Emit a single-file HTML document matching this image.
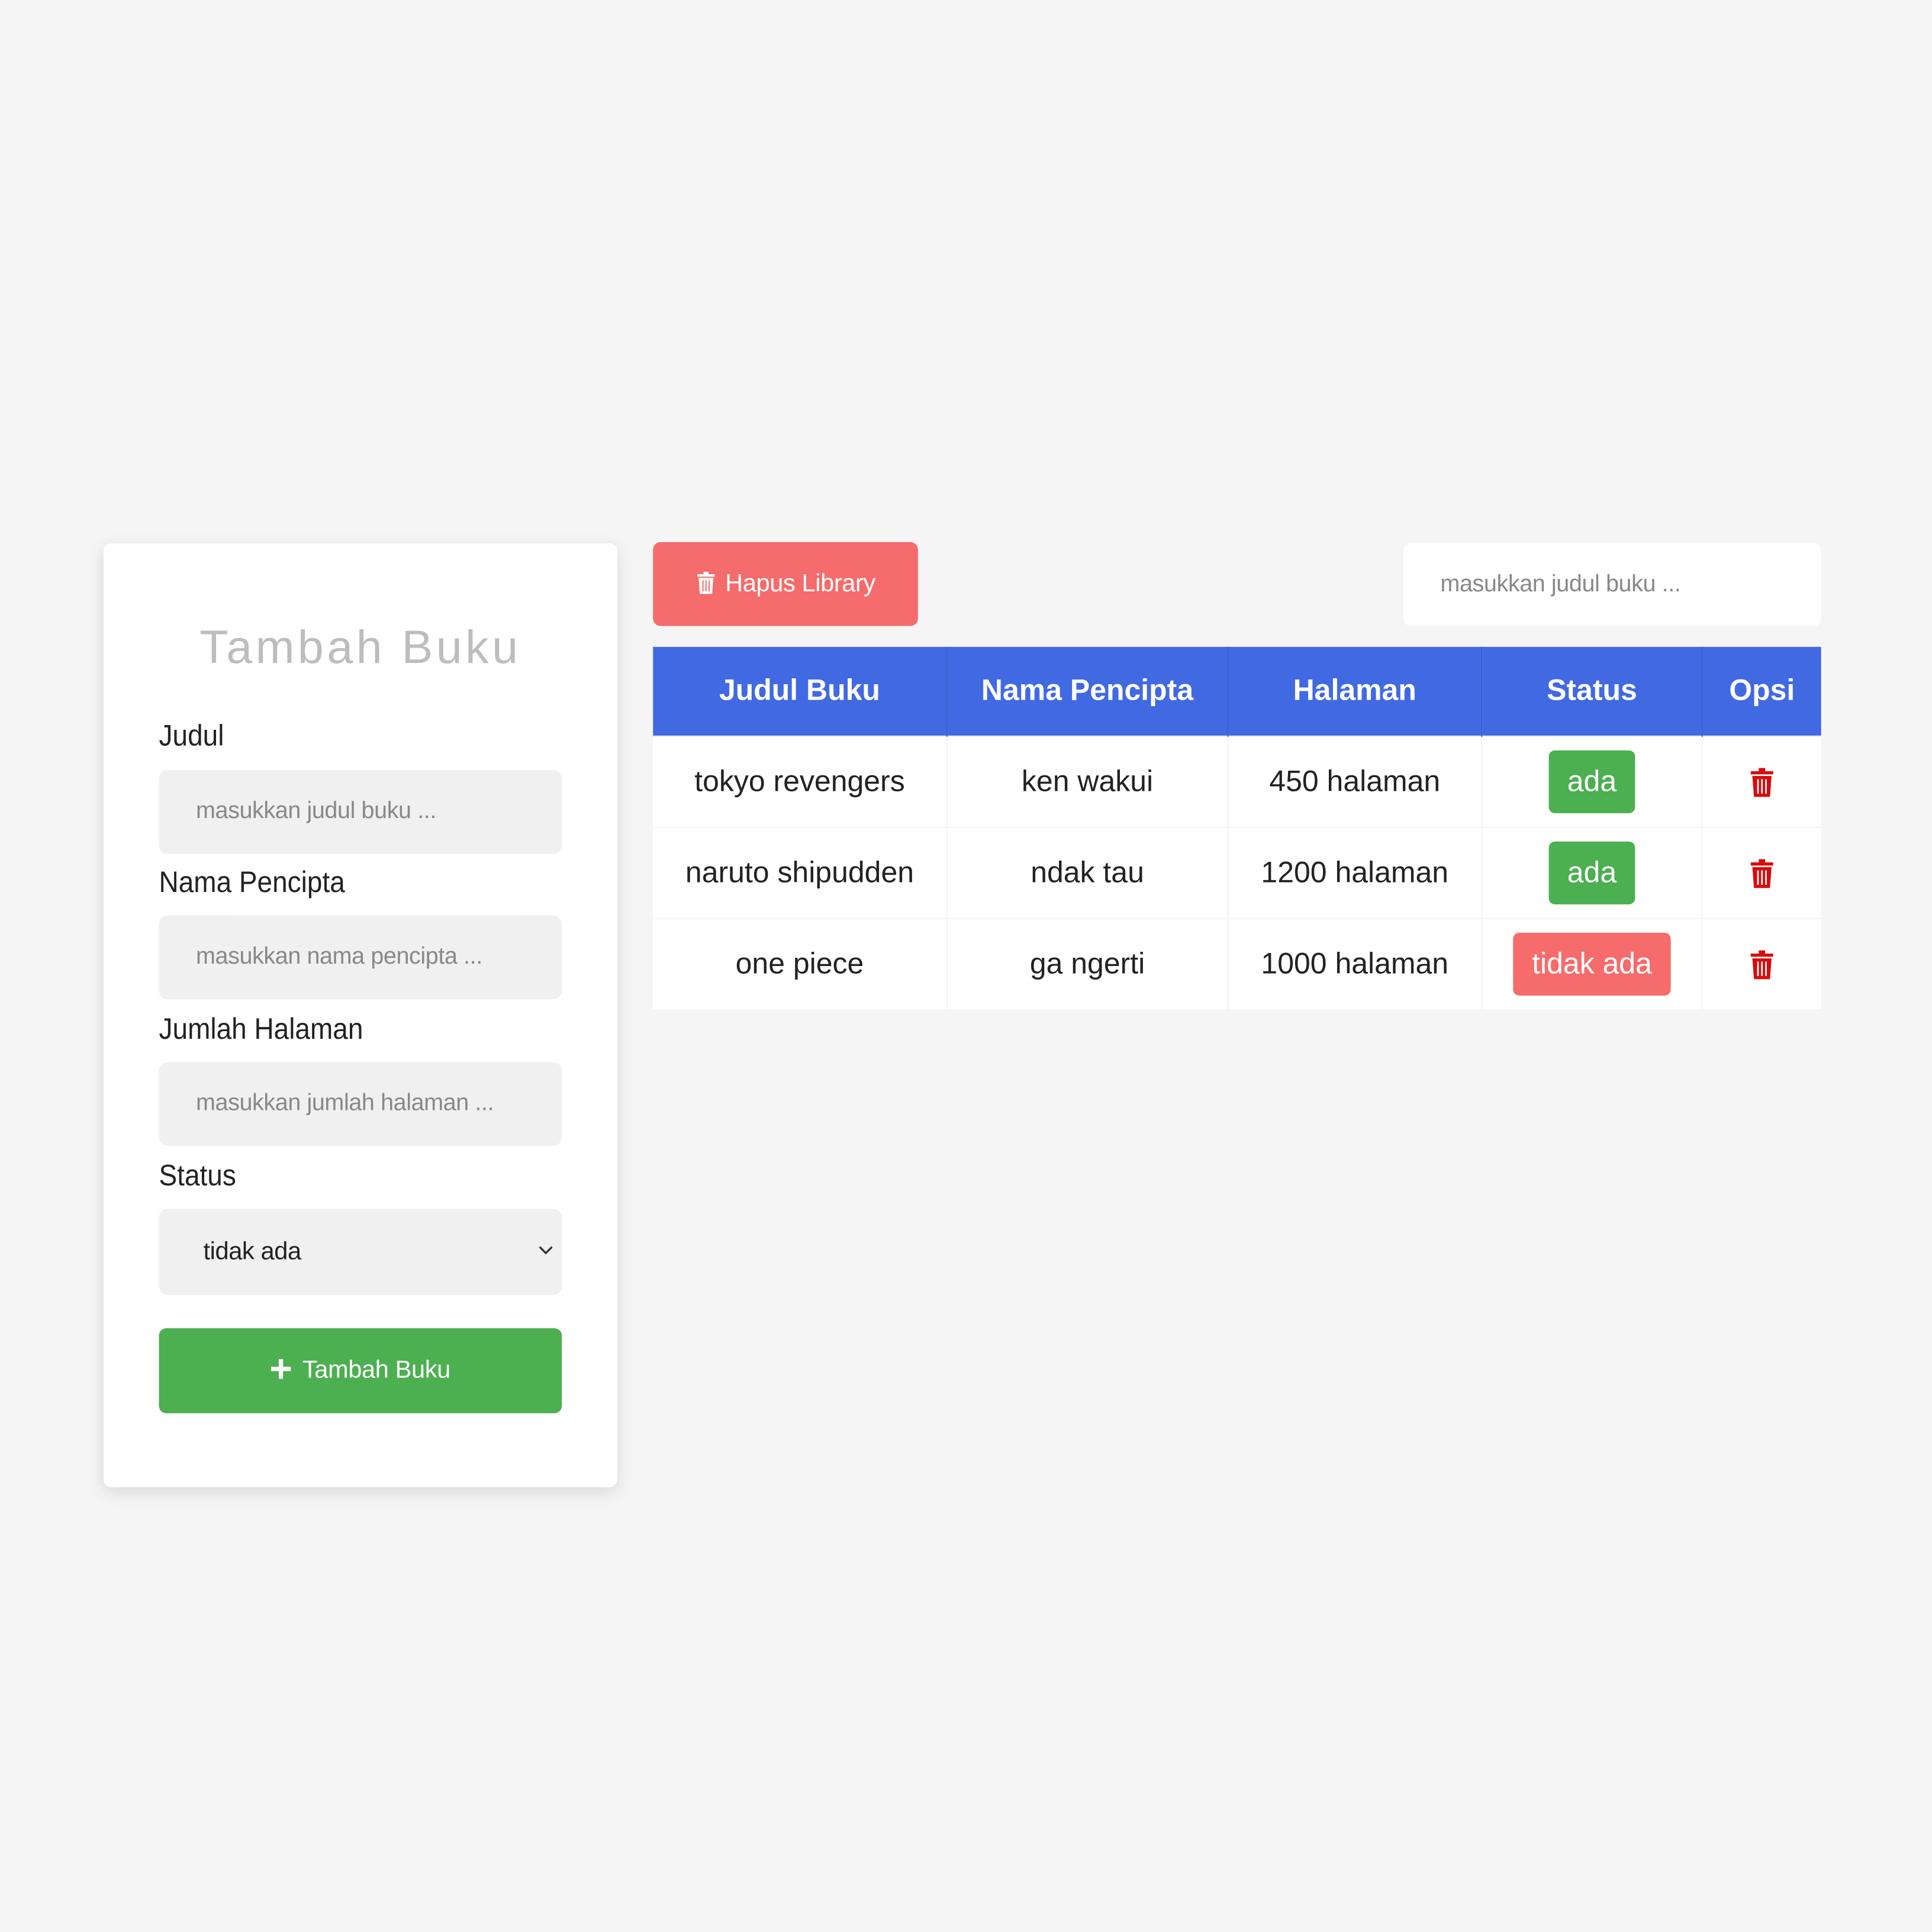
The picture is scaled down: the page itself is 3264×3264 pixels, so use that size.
<!DOCTYPE html>
<html><head><meta charset="utf-8"><style>
html,body{margin:0;padding:0;background:#f5f5f5;}
#w{position:absolute;left:0;top:0;width:1568px;height:1568px;transform:scale(2.0816327);transform-origin:0 0;font-family:"Liberation Sans",sans-serif;background:#f5f5f5;overflow:hidden}
.a{position:absolute}
.card{left:84px;top:441px;width:417px;height:766px;background:#fff;border-radius:6px;box-shadow:0 4px 14px rgba(0,0,0,.12)}
.title{left:84px;width:417px;top:505px;text-align:center;font-size:38px;color:#bdbdbd;letter-spacing:2.6px}
.lbl{left:129px;font-size:24px;color:#222}
.inp{left:129px;width:327px;height:68px;background:#f0f0f0;border-radius:7px;box-sizing:border-box;padding-left:30px;line-height:68px;font-size:19px;color:#888}
.btn{left:129px;top:1078px;width:327px;height:69px;background:#4caf50;border-radius:6px;color:#fff;font-size:20px;text-align:center;line-height:69px}
.hapus{left:530px;top:440px;width:215px;height:68px;background:#f66b6b;border-radius:6px;color:#fff;font-size:20px;text-align:center;line-height:68px}
.search{left:1139px;top:441px;width:339px;height:67px;background:#fff;border-radius:6px;box-sizing:border-box;padding-left:30px;line-height:67px;font-size:19px;color:#888}
table{position:absolute;left:530px;top:525px;width:948px;border-collapse:collapse;font-size:24px;color:#222;text-align:center}
th{background:#4169e1;color:#fff;height:72px;font-weight:bold;border-right:1px solid #3a5fd0;padding:0}
td{background:#fff;height:73px;padding:0;border-right:1px solid #f4f4f4;border-top:1px solid #f4f4f4}
th:last-child,td:last-child{border-right:none}
.bg{display:inline-block;background:#4caf50;color:#fff;border-radius:5px;padding:0 15px;height:51px;line-height:51px}
.br{background:#f66b6b}
svg{vertical-align:middle}
</style></head><body><div id="w">
<div class="a card"></div>
<div class="a title">Tambah Buku</div>
<div class="a lbl" style="top:584px">Judul</div>
<div class="a inp" style="top:625px">masukkan judul buku ...</div>
<div class="a lbl" style="top:703px">Nama Pencipta</div>
<div class="a inp" style="top:743px">masukkan nama pencipta ...</div>
<div class="a lbl" style="top:822px">Jumlah Halaman</div>
<div class="a inp" style="top:862px">masukkan jumlah halaman ...</div>
<div class="a lbl" style="top:941px">Status</div>
<div class="a inp" style="top:981px;height:70px;line-height:70px;padding-left:36px;color:#222;font-size:20px">tidak ada
<svg class="a" style="right:6px;top:29px" width="14" height="10" viewBox="0 0 14 10"><path d="M2 2l5 5 5-5" fill="none" stroke="#333" stroke-width="1.6"/></svg></div>
<div class="a btn"><svg width="18" height="18" viewBox="0 0 18 18" style="margin-right:8px;margin-top:-3px"><path d="M9 1v16M1 9h16" stroke="#fff" stroke-width="3.5"/></svg>Tambah Buku</div>
<div class="a hapus"><svg width="16" height="20" viewBox="0 0 16 20" style="margin-right:8px;margin-top:-4px"><path d="M1 3h14v2H1z M6 1h4v2H6z" fill="#fff"/><path d="M2 6h12l-1 13H3z" fill="#fff"/><path d="M5.5 8v9M8 8v9M10.5 8v9" stroke="#f66b6b" stroke-width="1"/></svg>Hapus Library</div>
<div class="a search">masukkan judul buku ...</div>
<table>
<tr><th style="width:238px">Judul Buku</th><th style="width:227px">Nama Pencipta</th><th style="width:205px">Halaman</th><th style="width:178px">Status</th><th>Opsi</th></tr>
<tr><td>tokyo revengers</td><td>ken wakui</td><td>450 halaman</td><td><span class="bg">ada</span></td><td><svg width="22" height="26" viewBox="0 0 16 20"><path d="M1 3h14v2H1z M6 1h4v2H6z" fill="#d90b0b"/><path d="M2 6h12l-1 13H3z" fill="#d90b0b"/><path d="M5.5 8v9M8 8v9M10.5 8v9" stroke="#fff" stroke-width="1"/></svg></td></tr>
<tr><td>naruto shipudden</td><td>ndak tau</td><td>1200 halaman</td><td><span class="bg">ada</span></td><td><svg width="22" height="26" viewBox="0 0 16 20"><path d="M1 3h14v2H1z M6 1h4v2H6z" fill="#d90b0b"/><path d="M2 6h12l-1 13H3z" fill="#d90b0b"/><path d="M5.5 8v9M8 8v9M10.5 8v9" stroke="#fff" stroke-width="1"/></svg></td></tr>
<tr><td>one piece</td><td>ga ngerti</td><td>1000 halaman</td><td><span class="bg br">tidak ada</span></td><td><svg width="22" height="26" viewBox="0 0 16 20"><path d="M1 3h14v2H1z M6 1h4v2H6z" fill="#d90b0b"/><path d="M2 6h12l-1 13H3z" fill="#d90b0b"/><path d="M5.5 8v9M8 8v9M10.5 8v9" stroke="#fff" stroke-width="1"/></svg></td></tr>
</table>
</div>
<style>
.lbl,.inp,td,th,.hapus,.btn,.search{font-stretch:condensed}
td,th,.lbl{transform-origin:center}
.lbl{transform:scaleX(.92);transform-origin:left}
td>span,td{letter-spacing:0}
.inp,.search,.hapus,.btn{letter-spacing:-0.2px}
</style>
</body></html>
